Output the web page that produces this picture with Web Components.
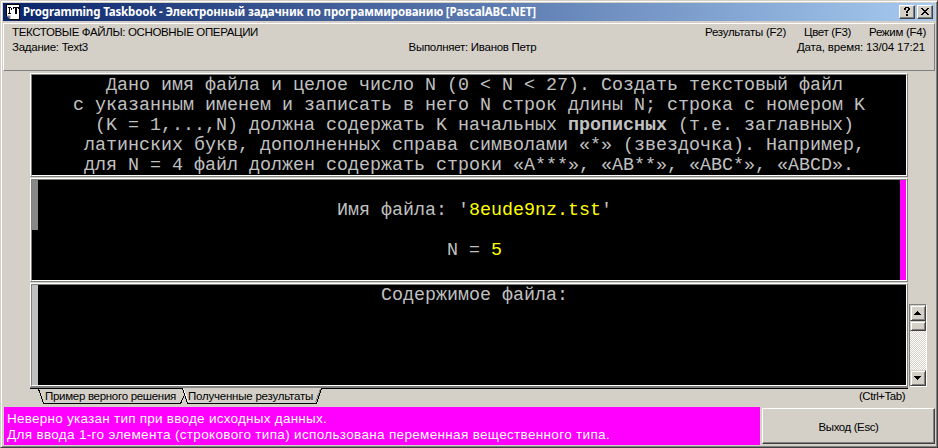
<!DOCTYPE html>
<html lang="ru">
<head>
<meta charset="utf-8">
<title>Programming Taskbook</title>
<style>
html,body{margin:0;padding:0;background:#d4d0c8;overflow:hidden}
</style>
</head>
<body>
<task-window></task-window>
<script>
const define = (name, html, init) => {
  const tpl = document.createElement('template');
  tpl.innerHTML = html;
  customElements.define(name, class extends HTMLElement {
    connectedCallback() {
      if (this.shadowRoot) return;
      this.attachShadow({mode: 'open'}).append(tpl.content.cloneNode(true));
      if (init) init(this, this.shadowRoot);
    }
  });
};

// Label whose letter spacing is adjusted so that the run takes "w" pixels.
define('ui-label', `<style>
:host{display:block;white-space:pre;flex:none;width:max-content}
</style><slot></slot>`, el => {
  const w = +el.getAttribute('w');
  const n = el.textContent.length;
  el.style.letterSpacing = '0px';
  const natural = el.getBoundingClientRect().width;
  el.style.letterSpacing = ((w - natural) / n) + 'px';
});

define('title-button', `<style>
:host{display:block;box-sizing:border-box;width:16px;height:14px;background:#d4d0c8;border:1px solid;border-color:#fff #404040 #404040 #fff;box-shadow:inset -1px -1px #808080}
svg{display:block}
</style><svg width="14" height="12" shape-rendering="crispEdges"><path fill="#000"/></svg>`, (el, root) => {
  root.querySelector('path').setAttribute('d', el.getAttribute('kind') === 'help'
    ? 'M5 1h4v1h-4zM4 2h2v2h-2zM8 2h2v2h-2zM7 4h2v1h-2zM6 5h2v2h-2zM6 8h2v2h-2z'
    : 'M3 2h2v1h-2zM9 2h2v1h-2zM4 3h2v1h-2zM8 3h2v1h-2zM5 4h4v1h-4zM6 5h2v1h-2zM5 6h4v1h-4zM4 7h2v1h-2zM8 7h2v1h-2zM3 8h2v1h-2zM9 8h2v1h-2z');
});

define('title-bar', `<style>
:host{display:flex;align-items:center;box-sizing:border-box;height:18px;padding:0 2px 0 3px;background:linear-gradient(90deg,#0a246a,#a6caf0);color:#fff;font:bold 11.5px/18px "Noto Sans","Open Sans",sans-serif}
svg{display:block;margin-right:3px}
.buttons{display:flex;gap:2px;margin-left:auto}
</style>
<svg width="14" height="16" shape-rendering="crispEdges">
<path fill="#000" d="M0 0h14v16H4L0 12z"/><path fill="#fff" d="M1 1h12v11H1z"/>
<path fill="#000" d="M2 3h3v1h-3zM3 4h1v5h-1zM5 4h1v2h-1zM2 9h3v1h-3zM7 3h6v1h-6zM7 4h1v1h-1zM9 4h2v6h-2zM12 4h1v1h-1z"/>
<path fill="#d4d0c8" d="M1 11h4v4H4L1 12z"/><path fill="#fff" d="M5 10h8v5H5z"/><path fill="#808080" d="M1 12h3v3h-1L1 13z"/>
</svg>
<ui-label w="514"><slot></slot></ui-label>
<div class="buttons"><title-button kind="help"></title-button><title-button kind="close"></title-button></div>`, (el, root) => {
  const label = root.querySelector('ui-label');
  const width = () => label.getBoundingClientRect().width;
  label.style.letterSpacing = '0px';
  label.style.letterSpacing = ((513 - width()) / el.textContent.length) + 'px';
});

define('info-panel', `<style>
:host{display:grid;grid-template-columns:1fr 1fr 1fr;grid-template-rows:15px 15px;box-sizing:border-box;height:48px;padding:1px 8px 0;border:1px solid;border-color:#fff #808080 #808080 #fff;font:11.5px/15px "Liberation Sans",sans-serif;color:#000}
.mid{grid-column:2;justify-self:center;margin-left:7px}
.right{justify-self:end;grid-column:3}
.menu{display:flex;gap:18px}
.date{margin-right:1px}
</style>
<ui-label w="246">ТЕКСТОВЫЕ ФАЙЛЫ: ОСНОВНЫЕ ОПЕРАЦИИ</ui-label>
<div class="right menu"><ui-label w="81">Результаты (F2)</ui-label><ui-label w="47">Цвет (F3)</ui-label><ui-label w="57">Режим (F4)</ui-label></div>
<ui-label w="76">Задание: Text3</ui-label>
<ui-label class="mid" w="128">Выполняет: Иванов Петр</ui-label>
<ui-label class="right date" w="128">Дата, время: 13/04 17:21</ui-label>`);

// Console pane: sunken black area with an optional bar at each side.
define('console-pane', `<style>
:host{display:block;height:104px;box-sizing:border-box;border:1px solid;border-color:#fff #808080 #808080 #fff;background:#000}
.inner{display:flex;height:102px;box-sizing:border-box;border:1px solid;border-color:#808080 #fff #fff #808080}
.bar{width:6px;flex:none;height:100%}
.left{background:var(--left,transparent);height:var(--left-height,100%)}
.rightbar{background:var(--right,transparent)}
.text{flex:1;padding-left:2px;min-width:0}
</style><div class="inner"><div class="bar left"></div><div class="text"><slot></slot></div><div class="bar rightbar"></div></div>`);

// One row on the console's 11x20 character grid, starting at column "col".
define('console-line', `<style>
:host{display:block;height:20px;white-space:pre;font:18.33px/22px "Liberation Mono",monospace;color:#c0c0c0}
::slotted(i){font-style:normal;color:#ff0}
</style><slot></slot>`, el => { el.style.marginLeft = (11 * (+el.getAttribute('col') || 0)) + 'px'; });

define('scroll-bar', `<style>
:host{display:flex;flex-direction:column;box-sizing:border-box;width:18px;height:83px;border:1px solid;border-color:#808080 #fff #fff #808080;background:repeating-conic-gradient(#fff 0 25%,#d4d0c8 0 50%) 0 0/2px 2px}
.b{box-sizing:border-box;width:16px;height:16px;flex:none;background:#d4d0c8;border:1px solid;border-color:#d4d0c8 #404040 #404040 #d4d0c8;box-shadow:inset 1px 1px #fff,inset -1px -1px #808080}
.thumb{height:10px}
.down{margin-top:auto}
svg{display:block}
</style>
<div class="b"><svg width="14" height="14" shape-rendering="crispEdges"><path d="M6 5h1v1h-1zM5 6h3v1h-3zM4 7h5v1h-5zM3 8h7v1h-7z"/></svg></div>
<div class="b thumb"></div>
<div class="b down"><svg width="14" height="14" shape-rendering="crispEdges"><path d="M3 5h7v1h-7zM4 6h5v1h-5zM5 7h3v1h-3zM6 8h1v1h-1z"/></svg></div>`);

define('tab-strip', `<style>
:host{display:grid;height:20px;width:878px;font:11.5px/16px "Liberation Sans",sans-serif;color:#000}
svg,.labels{grid-area:1/1}
svg{display:block}
.labels{display:flex;padding:1px 3px 0 15px}
.active{margin-left:12px}
.hint{margin-left:auto}
</style>
<svg width="878" height="20" shape-rendering="crispEdges">
<path fill="#808080" d="M0 0h878v1H0z"/>
<path fill="#000" d="M0 1h153v1H0zM291 1h587v1H291z"/>
<g fill="none" stroke="#000"><path d="M8.5 2L13.5 16.5H150.5L154.5 8"/><path d="M152.5 1L157.5 16.5H286.5L291.5 1"/></g>
<path fill="none" stroke="#fff" d="M153.5 2L158.5 15"/><path fill="none" stroke="#808080" d="M290.5 2L285.5 15"/>
</svg>
<div class="labels"><ui-label w="131">Пример верного решения</ui-label><ui-label class="active" w="125">Полученные результаты</ui-label><ui-label class="hint" w="46">(Ctrl+Tab)</ui-label></div>`);

define('status-message', `<style>
:host{display:block;box-sizing:border-box;width:756px;height:38px;padding:4px 0 0 3px;background:#f0f;color:#fff;font:13.5px/16px "Liberation Sans",sans-serif}
</style><slot></slot>`);

define('push-button', `<style>
:host{display:flex;align-items:center;justify-content:center;box-sizing:border-box;width:173px;height:36px;margin-top:1px;padding-top:2px;border:1px solid;border-color:#fff #404040 #404040 #fff;box-shadow:inset -1px -1px #808080;font:11.5px/16px "Liberation Sans",sans-serif;color:#000}
</style><slot></slot>`);

define('task-window', `<style>
:host{display:flex;flex-direction:column;box-sizing:border-box;width:938px;height:448px;padding:2px 2px 1px;background:#d4d0c8;border:1px solid;border-color:#d4d0c8 #404040 #404040 #d4d0c8;box-shadow:inset 1px 1px #fff,inset -1px -1px #808080}
info-panel{margin-top:2px}
.work{display:flex;gap:1px;padding:2px 0 0 27px;align-items:flex-end}
.panes{display:flex;flex-direction:column;gap:1px;width:878px}
tab-strip{margin-left:27px}
.foot{display:flex;gap:2px;padding-left:1px}
.file{padding-top:20px}
.gap{height:20px}
b{font-weight:bold}
.input{--left:#888;--left-height:50px;--right:#f0f}
.output{--left:#c0c0c0}
</style>
<title-bar>Programming Taskbook - Электронный задачник по программированию [PascalABC.NET]</title-bar>
<info-panel></info-panel>
<div class="work">
<div class="panes">
<console-pane>
<console-line col="6">Дано имя файла и целое число N (0 &lt; N &lt; 27). Создать текстовый файл</console-line>
<console-line col="3">с указанным именем и записать в него N строк длины N; строка с номером K</console-line>
<console-line col="5">(K = 1,...,N) должна содержать K начальных <b>прописных</b> (т.е. заглавных)</console-line>
<console-line col="4">латинских букв, дополненных справа символами «*» (звездочка). Например,</console-line>
<console-line col="4">для N = 4 файл должен содержать строки «A***», «AB**», «ABC*», «ABCD».</console-line>
</console-pane>
<console-pane class="input">
<div class="file"><console-line col="27">Имя файла: '<i>8eude9nz.tst</i>'</console-line></div>
<div class="gap"></div>
<console-line col="37">N = <i>5</i></console-line>
</console-pane>
<console-pane class="output">
<console-line col="31">Содержимое файла:</console-line>
</console-pane>
</div>
<scroll-bar></scroll-bar>
</div>
<tab-strip></tab-strip>
<div class="foot">
<status-message><ui-label w="320">Неверно указан тип при вводе исходных данных.</ui-label><ui-label w="603">Для ввода 1-го элемента (строкового типа) использована переменная вещественного типа.</ui-label></status-message>
<push-button><ui-label w="60">Выход (Esc)</ui-label></push-button>
</div>`);
</script>
</body>
</html>
